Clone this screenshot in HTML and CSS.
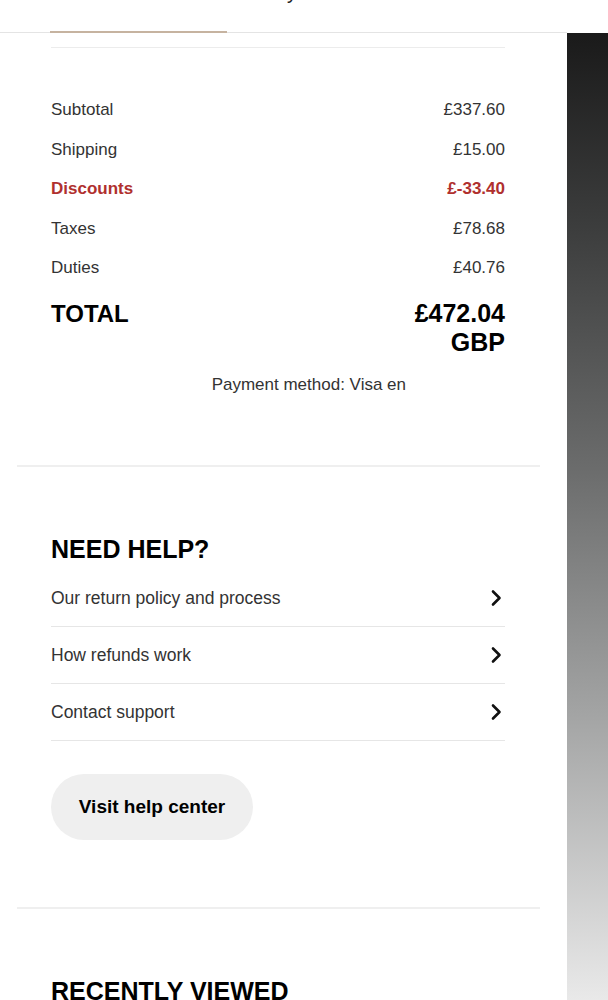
FILE: index.html
```html
<!DOCTYPE html>
<html lang="en">
<head>
    <meta charset="UTF-8">
    <meta name="viewport" content="width=device-width, initial-scale=1.0">
    <title>Order summary</title>
    <link rel="stylesheet" href="styles.css">
</head>
<body>
    <div class="screen">
        <div class="page">
            <header class="topbar">
                <span class="topbar-icon">&#9734;</span>
                <span class="topbar-title">Order summary</span>
            </header>
            <div class="tabs"><span class="tab-active"></span></div>

            <section class="summary">
                <div class="summary-rule"></div>
                <div class="row"><span>Subtotal</span><span>£337.60</span></div>
                <div class="row"><span>Shipping</span><span>£15.00</span></div>
                <div class="row discount"><span>Discounts</span><span>£-33.40</span></div>
                <div class="row"><span>Taxes</span><span>£78.68</span></div>
                <div class="row"><span>Duties</span><span>£40.76</span></div>
                <div class="row total">
                    <span class="total-label">TOTAL</span>
                    <span class="total-amount">£472.04<br>GBP</span>
                </div>
                <div class="payment">Payment method: Visa en<span class="redacted"></span></div>
            </section>

            <hr class="divider">

            <section class="help">
                <h2>NEED HELP?</h2>
                <ul class="help-links">
                    <li><span>Our return policy and process</span>
                        <svg class="chevron" width="14" height="18" viewBox="0 0 14 18"><path d="M4 2.5 L10.5 9 L4 15.5" fill="none" stroke="#111" stroke-width="2.6" stroke-linecap="round" stroke-linejoin="round"/></svg>
                    </li>
                    <li><span>How refunds work</span>
                        <svg class="chevron" width="14" height="18" viewBox="0 0 14 18"><path d="M4 2.5 L10.5 9 L4 15.5" fill="none" stroke="#111" stroke-width="2.6" stroke-linecap="round" stroke-linejoin="round"/></svg>
                    </li>
                    <li><span>Contact support</span>
                        <svg class="chevron" width="14" height="18" viewBox="0 0 14 18"><path d="M4 2.5 L10.5 9 L4 15.5" fill="none" stroke="#111" stroke-width="2.6" stroke-linecap="round" stroke-linejoin="round"/></svg>
                    </li>
                </ul>
                <button class="help-button">Visit help center</button>
            </section>

            <hr class="divider">

            <section class="recent">
                <h2>RECENTLY VIEWED</h2>
            </section>
        </div>
        <div class="edge"></div>
    </div>
</body>
</html>
```

FILE: styles.css
```css
body {
    margin: 0;
    background-color: #ffffff;
    font-family: "Liberation Sans", Arial, sans-serif;
    color: #333333;
}
.screen {
    display: flex;
    height: 1000px;
    overflow: hidden;
}
.page {
    width: 567px;
    flex-shrink: 0;
}
.edge {
    flex: 1;
    margin-top: 33px;
    background: linear-gradient(#1a1a1a, #3c3d3d 20%, #6b6c6c 45%, #a2a3a3 70%, #e9e9e9);
}

/* header, mostly scrolled off */
.topbar {
    height: 31px;
    overflow: hidden;
    display: flex;
    align-items: flex-end;
    padding-left: 20px;
    color: #222;
}
.topbar-icon,
.topbar-title {
    font-size: 20px;
    line-height: 24px;
    margin-bottom: 27px;
}
.topbar-title {
    margin-left: 120px;
}
.tabs {
    display: flex;
    padding-left: 50px;
    border-bottom: 1px solid #e4e4e4;
}
.tab-active {
    width: 177px;
    height: 2px;
    margin-bottom: -1px;
    background-color: #c6b3a0;
}

/* order summary */
.summary {
    padding: 14px 62px 70px 51px;
}
.summary-rule {
    height: 1px;
    background-color: #ececec;
    margin-bottom: 52px;
}
.row {
    display: flex;
    justify-content: space-between;
    font-size: 17px;
    line-height: 20px;
    margin-bottom: 19.5px;
}
.discount {
    color: #b0302e;
    font-weight: bold;
}
.total {
    margin-top: 20.5px;
    margin-bottom: 18.5px;
    color: #000;
    font-weight: bold;
    line-height: 29px;
}
.total-label {
    font-size: 24px;
}
.total-amount {
    font-size: 25px;
    text-align: right;
}
.payment {
    font-size: 17px;
    line-height: 20px;
    text-align: right;
}
.redacted {
    display: inline-block;
    width: 99px;
}

.divider {
    margin: 0 27px 0 17px;
    border: 0;
    height: 2px;
    background-color: #efefef;
}

/* help */
.help {
    padding: 0 62px 67px 51px;
}
.help h2,
.recent h2 {
    margin: 67px 0 6px;
    font-size: 25px;
    line-height: 30px;
    color: #000;
}
.help-links {
    list-style: none;
    margin: 0;
    padding: 0;
}
.help-links li {
    display: flex;
    justify-content: space-between;
    align-items: center;
    padding: 18px 0;
    font-size: 17.5px;
    line-height: 20px;
    border-bottom: 1px solid #e6e6e6;
}
.chevron {
    margin-right: 2px;
}
.help-button {
    margin-top: 33px;
    width: 202px;
    height: 66px;
    border: 0;
    border-radius: 33px;
    background-color: #efefef;
    font-family: inherit;
    font-size: 19px;
    font-weight: bold;
    color: #000;
}

.recent {
    padding: 0 62px 0 51px;
}
```
